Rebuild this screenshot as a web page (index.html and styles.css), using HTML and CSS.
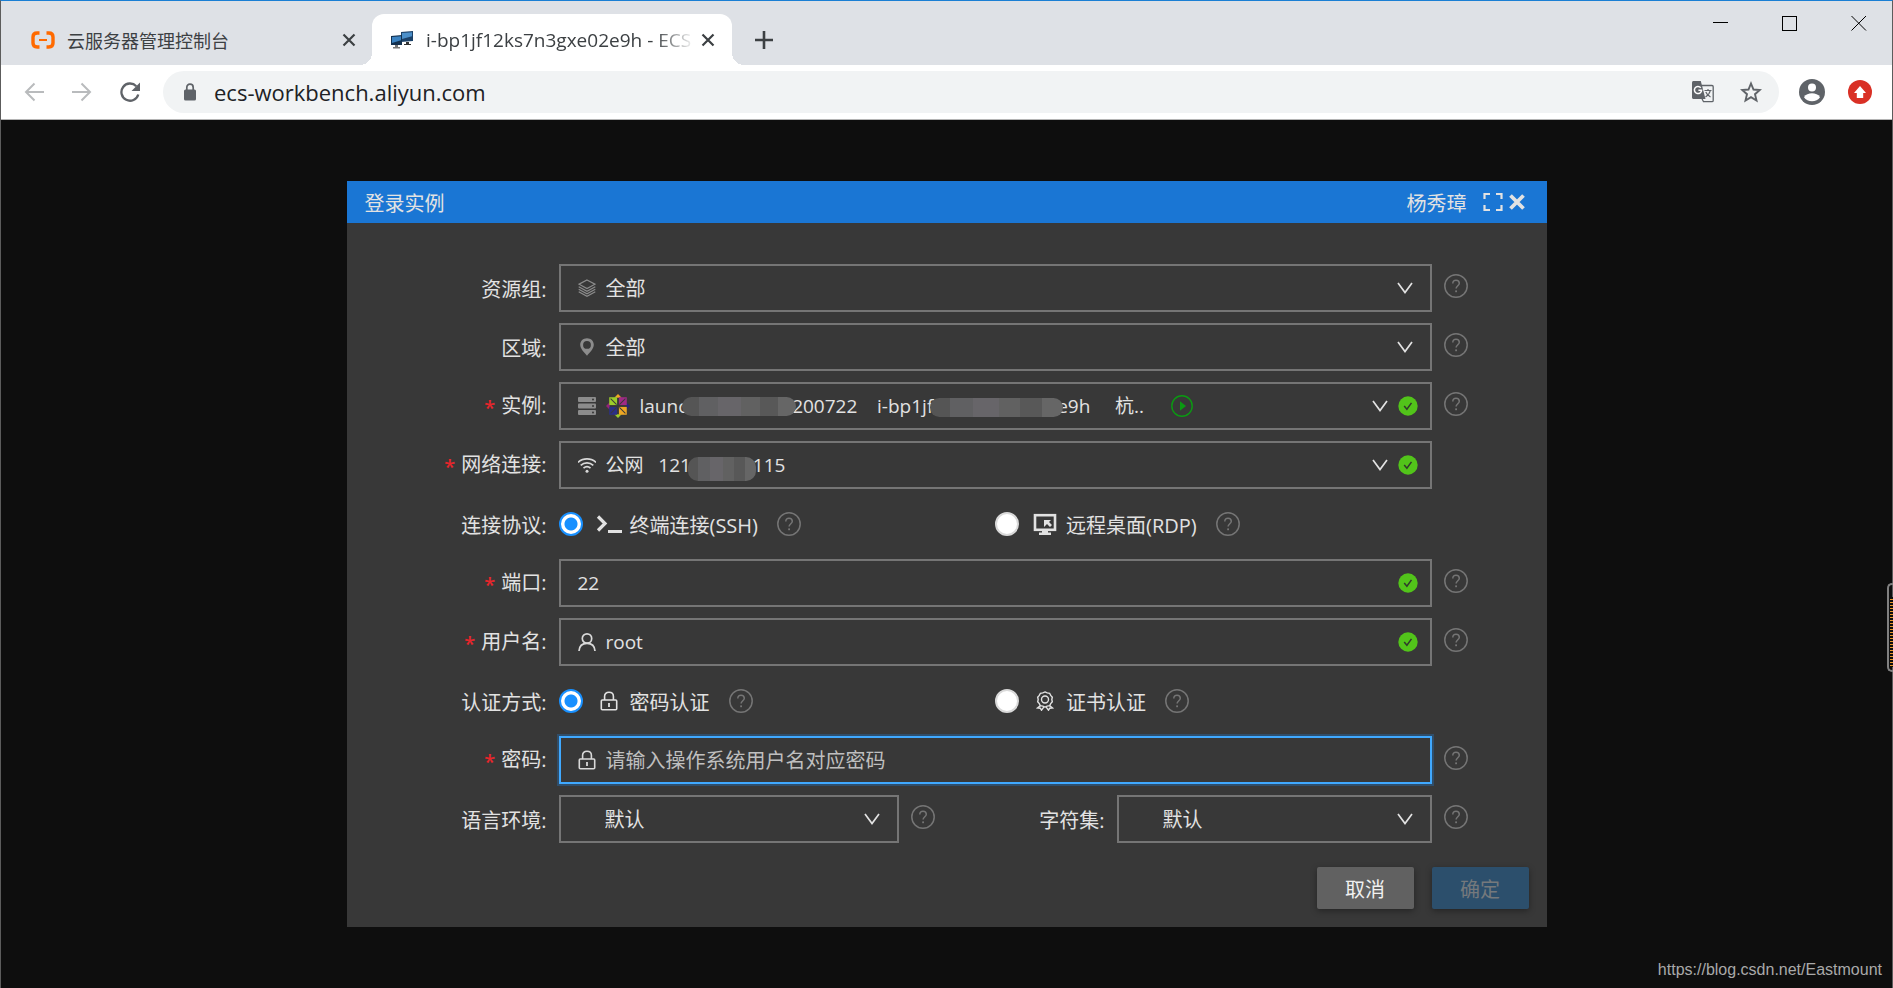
FILE: index.html
```html
<!DOCTYPE html>
<html lang="zh-CN">
<head>
<meta charset="utf-8">
<title>i-bp1jf12ks7n3gxe02e9h - ECS</title>
<link rel="stylesheet" href="styles.css">
</head>
<body>
<svg class="defs" aria-hidden="true">
  <symbol id="help" viewBox="0 0 24 24"><g fill="none" stroke="currentColor"><circle cx="12" cy="12" r="11.2" stroke-width="1.5"/><path d="M8.8 9.6C8.8 7.4 10.1 6.2 12 6.2s3.3 1.3 3.3 3.1c0 2.4-3.2 2.6-3.2 5.3" stroke-width="1.5"/></g><rect x="11.2" y="16.4" width="1.8" height="1.8" fill="currentColor"/></symbol>
  <symbol id="chevron" viewBox="0 0 16 12"><path d="M1 1l7 9.5L15 1" fill="none" stroke="currentColor" stroke-width="1.7"/></symbol>
  <symbol id="ok" viewBox="0 0 20 20"><circle cx="10" cy="10" r="9.7" fill="#52c41a"/><path d="M6.2 10l2.7 3.2 4.6-6.3" fill="none" stroke="#303a2c" stroke-width="1.5"/></symbol>
  <symbol id="lock" viewBox="0 0 18 20"><g fill="none" stroke="currentColor" stroke-width="1.6"><rect x="1.3" y="9" width="15.4" height="9.8" rx="1"/><path d="M4.6 9V5.2C4.6 2.8 6.2 1.2 9 1.2s4.4 1.6 4.4 4V9"/><path d="M9 12v4" stroke-width="1.8"/></g></symbol>
  <symbol id="close" viewBox="0 0 14 14"><path d="M1.5 1.5l11 11M12.5 1.5l-11 11" fill="none" stroke="currentColor" stroke-width="2.2"/></symbol>
</svg>

<div class="window">
  <header class="tabstrip">
    <div class="tab">
      <svg class="favicon" viewBox="0 0 24 18"><path d="M8.5 2H6.2C3.6 2 2 3.600 2 6v6c0 2.400 1.600 4 4.200 4h2.300M15.500 2h2.300C20.400 2 22 3.600 22 6v6c0 2.400-1.600 4-4.200 4h-2.300" fill="none" stroke="#ff6a00" stroke-width="3.400"/><path d="M8 9h8" stroke="#ff6a00" stroke-width="2"/></svg>
      <span class="tab-title">云服务器管理控制台</span>
      <button class="icon-btn" aria-label="关闭标签页"><svg class="s14"><use href="#close"/></svg></button>
    </div>
    <div class="tab tab-active">
      <svg class="favicon" viewBox="0 0 24 18"><path d="M11 1l12-1v10l-12 1z" fill="#1b4168"/><path d="M12 2l10-.8v4L12 8z" fill="#4b8fc9"/><path d="M16 11h3v2h2v1h-7v-1h2z" fill="#333"/><path d="M1 5l11-1v10L1 14z" fill="#12304f"/><path d="M2 6l9-.8v4L2 12z" fill="#3b83c2"/><path d="M5 14h3v2h2v1.500H3V16h2z" fill="#777"/></svg>
      <span class="tab-title tab-fade">i-bp1jf12ks7n3gxe02e9h - ECS</span>
      <button class="icon-btn" aria-label="关闭标签页"><svg class="s14"><use href="#close"/></svg></button>
    </div>
    <button class="icon-btn new-tab" aria-label="新标签页"><svg class="s18" viewBox="0 0 18 18"><path d="M9 0v18M0 9h18" stroke="currentColor" stroke-width="2.600"/></svg></button>
    <div class="win-controls">
      <button class="icon-btn" aria-label="最小化"><svg class="s16" viewBox="0 0 16 16"><path d="M0 7.500h15" stroke="#000"/></svg></button>
      <button class="icon-btn" aria-label="最大化"><svg class="s16" viewBox="0 0 16 16"><rect x=".5" y="1.500" width="14" height="14" fill="none" stroke="#000"/></svg></button>
      <button class="icon-btn" aria-label="关闭"><svg class="s16" viewBox="0 0 16 16"><path d="M.5 1l14.500 14.500M15 1L.5 15.500" stroke="#000"/></svg></button>
    </div>
  </header>

  <nav class="toolbar">
    <div class="nav-buttons">
      <button class="icon-btn faded" aria-label="后退"><svg class="s20" viewBox="0 0 20 20"><path d="M20 10H2M10.500 1.500L2 10l8.500 8.500" fill="none" stroke="currentColor" stroke-width="2"/></svg></button>
      <button class="icon-btn faded" aria-label="前进"><svg class="s20" viewBox="0 0 20 20"><path d="M0 10h18M9.500 1.500L18 10l-8.500 8.500" fill="none" stroke="currentColor" stroke-width="2"/></svg></button>
      <button class="icon-btn" aria-label="重新加载"><svg class="s20" viewBox="0 0 20 20"><path d="M16.300 4.200A8.600 8.600 0 1 0 18.300 12.500" fill="none" stroke="currentColor" stroke-width="2.300"/><path d="M20 .5V9h-8.500z" fill="currentColor"/></svg></button>
    </div>
    <label class="omnibox">
      <svg class="url-lock" viewBox="0 0 14 18"><rect x="1" y="6.500" width="12" height="11" rx="1.500" fill="#5f6368"/><path d="M3.800 7V4.500C3.800 2.500 5 1.200 7 1.200s3.200 1.300 3.200 3.300V7" fill="none" stroke="#5f6368" stroke-width="1.700"/></svg>
      <input class="url" type="text" value="ecs-workbench.aliyun.com" aria-label="地址">
      <svg class="s22" viewBox="0 0 22 22"><path d="M9 4.500h11c.7 0 1.200.5 1.200 1.200v13.800c0 .7-.5 1.200-1.200 1.200H11.500l-2-4" fill="none" stroke="#5f6368" stroke-width="1.300"/><path d="M1.500 0h7.300l4.700 18H1.500C.7 18 0 17.300 0 16.500v-15C0 .7.700 0 1.500 0z" fill="#5f6368"/><path d="M8.800 6.700A3.600 3.600 0 1 0 9.600 9.300H6.400" fill="none" stroke="#fff" stroke-width="1.500"/><path d="M12.500 9.500h7M16 8v1.500M18.300 9.500c-.6 3-2.500 5-4.800 6.500M13.800 11c.8 2 2.400 3.800 4.700 5" fill="none" stroke="#5f6368" stroke-width="1.200"/></svg>
      <svg class="s22 star" viewBox="0 0 22 22"><path d="M11 2.500l2.500 6 6.300.5-4.800 4.200 1.500 6.300-5.500-3.400-5.500 3.400L7 13.200 2.200 9l6.300-.5z" fill="none" stroke="#5f6368" stroke-width="1.900"/></svg>
    </label>
    <button class="icon-btn profile" aria-label="个人资料"><svg class="s26" viewBox="0 0 26 26"><circle cx="13" cy="13" r="13" fill="#5f6368"/><circle cx="13" cy="8.500" r="4" fill="#fff"/><path d="M5 18.200c1.500-3 4.800-4 8-4s6.500 1 8 4c-1.600 2.500-4.700 4-8 4s-6.400-1.500-8-4z" fill="#fff"/></svg></button>
    <button class="icon-btn" aria-label="更新"><svg class="s24" viewBox="0 0 24 24"><circle cx="12" cy="12" r="12" fill="#d93025"/><path d="M12 6l6 7h-2.800v5H8.800v-5H6z" fill="#fff"/></svg></button>
  </nav>

  <main class="page">
    <section class="dialog" role="dialog" aria-labelledby="dlg-title">
      <header class="dialog-head">
        <h1 class="dialog-title" id="dlg-title">登录实例</h1>
        <span class="user-name">杨秀璋</span>
        <button class="icon-btn" aria-label="全屏"><svg class="s20" viewBox="0 0 20 20"><path d="M1.500 7V2H7M13 2h5.500v5M18.500 13v5H13M7 18H1.500v-5" fill="none" stroke="currentColor" stroke-width="2.200"/></svg></button>
        <button class="icon-btn" aria-label="关闭对话框"><svg class="s16" viewBox="0 0 16 16"><path d="M1.500 1.500l13 13M14.500 1.500l-13 13" stroke="currentColor" stroke-width="3.800"/></svg></button>
      </header>

      <form class="form">
        <div class="row">
          <label class="label" for="group">资源组:</label>
          <div class="field">
            <svg class="field-icon dim" viewBox="0 0 18 18"><g fill="none" stroke="currentColor" stroke-width="1.200"><path d="M9 1l8 4.200-8 4.300L1 5.200z"/><path d="M.7 7.800L9 12.200l8.300-4.400M.7 10.300L9 14.700l8.300-4.400M.7 12.800L9 17.200l8.300-4.400"/></g></svg>
            <select class="control" id="group"><option>全部</option></select>
            <svg class="chevron"><use href="#chevron"/></svg>
          </div>
          <button type="button" class="help" aria-label="资源组说明"><svg class="s24"><use href="#help"/></svg></button>
        </div>
        <div class="row">
          <label class="label" for="region">区域:</label>
          <div class="field">
            <svg class="field-icon dim" viewBox="0 0 18 18"><path fill-rule="evenodd" d="M9 .3c3.900 0 6.800 2.800 6.800 6.500 0 4-4.300 8-6.800 11C6.500 14.800 2.200 10.800 2.200 6.800 2.200 3.100 5.100.3 9 .3zM9 3a3.900 3.900 0 1 0 0 7.800A3.900 3.900 0 0 0 9 3z" fill="currentColor"/></svg>
            <select class="control" id="region"><option>全部</option></select>
            <svg class="chevron"><use href="#chevron"/></svg>
          </div>
          <button type="button" class="help" aria-label="区域说明"><svg class="s24"><use href="#help"/></svg></button>
        </div>
        <div class="row">
          <label class="label" for="instance"><span class="req">*</span>实例:</label>
          <div class="field field-checked">
            <svg class="field-icon dim" viewBox="0 0 18 18"><g fill="currentColor"><rect width="18" height="5" rx="1"/><rect y="6.500" width="18" height="5" rx="1"/><rect y="13" width="18" height="5" rx="1"/></g><g fill="#383838"><circle cx="15" cy="2.500" r="1"/><circle cx="15" cy="9" r="1"/><circle cx="15" cy="15.500" r="1"/></g></svg>
            <svg class="s24" viewBox="0 0 26 26"><path d="M13 0l4 4H9z" fill="#efa724"/><path d="M0 13l4-4v8z" fill="#932279"/><path d="M26 13l-4-4v8z" fill="#262577"/><path d="M13 26l4-4H9z" fill="#9ccd2a"/><path d="M3.500 3.500H12V12H3.500z" fill="#9ccd2a"/><path d="M14 3.500h8.500V12H14z" fill="#a02a86"/><path d="M14 14h8.500v8.500H14z" fill="#efa724"/><path d="M3.500 14H12v8.500H3.500z" fill="#2b2f86"/><path d="M5 5l6.500 6.500M21 5l-6.500 6.500M21 21l-6.500-6.500M5 21l6.500-6.500" stroke="#3b3b3b" stroke-width="1.100"/></svg>
            <span class="instance-box">
              <select class="control mixed" id="instance"><option>launc&emsp;&emsp;&emsp;&emsp;&emsp;&nbsp;&nbsp;200722&nbsp;&nbsp;&nbsp;&nbsp;i-bp1jf&emsp;&emsp;&emsp;&emsp;&emsp;&emsp;&nbsp;&nbsp;e9h&nbsp;&nbsp;&nbsp;&nbsp;&nbsp;杭..</option></select>
              <span class="smudge smudge-name"></span>
              <span class="smudge smudge-id"></span>
              <svg class="running" viewBox="0 0 22 22"><circle cx="11" cy="11" r="10.200" fill="none" stroke="#0b9a12" stroke-width="1.400"/><path d="M9 6.300l6 4.700-6 4.700z" fill="#0b9a12"/></svg>
            </span>
            <svg class="chevron"><use href="#chevron"/></svg>
            <svg class="s20"><use href="#ok"/></svg>
          </div>
          <button type="button" class="help" aria-label="实例说明"><svg class="s24"><use href="#help"/></svg></button>
        </div>
        <div class="row">
          <label class="label" for="network"><span class="req">*</span>网络连接:</label>
          <div class="field field-checked">
            <svg class="field-icon" viewBox="0 0 18 18"><g fill="none" stroke="currentColor" stroke-width="1.700"><path d="M0 6.400c5-4.600 13-4.600 18 0M2.700 9.300c3.700-3.300 8.900-3.300 12.600 0M5.500 12.200c2.100-1.800 4.900-1.800 7 0"/></g><circle cx="9" cy="15.300" r="1.500" fill="currentColor"/></svg>
            <span class="instance-box">
              <select class="control mixed" id="network"><option>公网&nbsp;&nbsp;&nbsp;121&emsp;&emsp;&emsp;&nbsp;115</option></select>
              <span class="smudge smudge-ip"></span>
            </span>
            <svg class="chevron"><use href="#chevron"/></svg>
            <svg class="s20"><use href="#ok"/></svg>
          </div>
        </div>
        <div class="row" role="radiogroup" aria-labelledby="proto-label">
          <span class="label" id="proto-label">连接协议:</span>
          <div class="options">
            <div class="option">
              <input class="radio" type="radio" name="proto" id="ssh" checked>
              <label class="option-label" for="ssh"><svg class="s26" viewBox="0 0 26 26"><path d="M2 5.500l7 7-7 7" fill="none" stroke="currentColor" stroke-width="3.200"/><path d="M12 20.500h14" stroke="currentColor" stroke-width="3"/></svg>终端连接(SSH)</label>
              <button type="button" class="hint" aria-label="SSH 说明"><svg class="s24"><use href="#help"/></svg></button>
            </div>
            <div class="option">
              <input class="radio" type="radio" name="proto" id="rdp">
              <label class="option-label" for="rdp"><svg class="s26" viewBox="0 0 26 26"><rect x="3" y="4.200" width="20" height="14.600" fill="none" stroke="currentColor" stroke-width="2.600"/><path d="M7 21.500h12V24H7z" fill="currentColor"/><path d="M10 18h6v4h-6zM12 9h7l-2 2 3 3-2 2-3-3-3 3z" fill="currentColor"/></svg>远程桌面(RDP)</label>
              <button type="button" class="hint" aria-label="RDP 说明"><svg class="s24"><use href="#help"/></svg></button>
            </div>
          </div>
        </div>
        <div class="row">
          <label class="label" for="port"><span class="req">*</span>端口:</label>
          <div class="field field-checked">
            <input class="control mixed" id="port" type="text" value="22">
            <svg class="s20"><use href="#ok"/></svg>
          </div>
          <button type="button" class="help" aria-label="端口说明"><svg class="s24"><use href="#help"/></svg></button>
        </div>
        <div class="row">
          <label class="label" for="user"><span class="req">*</span>用户名:</label>
          <div class="field field-checked">
            <svg class="field-icon" viewBox="0 0 18 18"><g fill="none" stroke="currentColor" stroke-width="1.700"><circle cx="9" cy="5.500" r="4.700"/><path d="M1 18c.3-4.800 3.500-7.600 8-7.600s7.700 2.800 8 7.600"/></g></svg>
            <input class="control mixed" id="user" type="text" value="root">
            <svg class="s20"><use href="#ok"/></svg>
          </div>
          <button type="button" class="help" aria-label="用户名说明"><svg class="s24"><use href="#help"/></svg></button>
        </div>
        <div class="row" role="radiogroup" aria-labelledby="auth-label">
          <span class="label" id="auth-label">认证方式:</span>
          <div class="options">
            <div class="option">
              <input class="radio" type="radio" name="auth" id="pwd" checked>
              <label class="option-label" for="pwd"><svg class="option-icon"><use href="#lock"/></svg>密码认证</label>
              <button type="button" class="hint" aria-label="密码认证说明"><svg class="s24"><use href="#help"/></svg></button>
            </div>
            <div class="option">
              <input class="radio" type="radio" name="auth" id="cert">
              <label class="option-label" for="cert"><svg class="option-icon" viewBox="0 0 18 20"><g fill="none" stroke="currentColor" stroke-width="1.400"><path d="M9 .9l2.200 1 2.400.4 1.100 2.100 1.600 1.800-.5 2.300.5 2.300-1.600 1.800-1.100 2.100-2.400.4-2.200 1-2.200-1-2.400-.4-1.100-2.100-1.600-1.800.5-2.300-.5-2.300 1.600-1.800 1.100-2.100 2.400-.4z"/><circle cx="9" cy="8.500" r="3.500"/><path d="M4.500 14.600L1.500 17l2.800.2 1.200 2 2.500-3.300M13.500 14.600l3 2.400-2.800.2-1.200 2-2.500-3.300"/></g></svg>证书认证</label>
              <button type="button" class="hint" aria-label="证书认证说明"><svg class="s24"><use href="#help"/></svg></button>
            </div>
          </div>
        </div>
        <div class="row">
          <label class="label" for="password"><span class="req">*</span>密码:</label>
          <div class="field field-focus">
            <svg class="field-icon" viewBox="0 0 18 20"><use href="#lock"/></svg>
            <input class="control" id="password" type="password" placeholder="请输入操作系统用户名对应密码">
          </div>
          <button type="button" class="help" aria-label="密码说明"><svg class="s24"><use href="#help"/></svg></button>
        </div>
        <div class="row row-split">
          <label class="label" for="lang">语言环境:</label>
          <div class="field field-indent">
            <select class="control" id="lang"><option>默认</option></select>
            <svg class="chevron"><use href="#chevron"/></svg>
          </div>
          <button type="button" class="help" aria-label="语言环境说明"><svg class="s24"><use href="#help"/></svg></button>
          <label class="label" for="charset">字符集:</label>
          <div class="field field-indent">
            <select class="control" id="charset"><option>默认</option></select>
            <svg class="chevron"><use href="#chevron"/></svg>
          </div>
          <button type="button" class="help" aria-label="字符集说明"><svg class="s24"><use href="#help"/></svg></button>
        </div>
        <div class="actions">
          <button type="button" class="btn">取消</button>
          <button type="submit" class="btn btn-primary" disabled>确定</button>
        </div>
      </form>
    </section>
    <span class="side-handle"></span>
    <a class="watermark" href="https://blog.csdn.net/Eastmount">https://blog.csdn.net/Eastmount</a>
  </main>
</div>
</body>
</html>
```

FILE: styles.css
```css
* { box-sizing: border-box; }

body {
  margin: 0;
  background: #0e0e0e;
  font-family: "Open Sans", "Noto Sans CJK SC", sans-serif;
  font-size: 20px;
}

button, input, select { font: inherit; }
svg { flex: none; display: block; }

.defs { position: absolute; width: 0; height: 0; }

.s14 { width: 14px; height: 14px; }
.s16 { width: 16px; height: 16px; }
.s18 { width: 18px; height: 18px; }
.s20 { width: 20px; height: 20px; }
.s22 { width: 22px; height: 22px; }
.s24 { width: 24px; height: 24px; }
.s26 { width: 26px; height: 26px; }

.icon-btn, .help, .hint {
  display: flex;
  align-items: center;
  padding: 0;
  border: 0;
  background: none;
  color: inherit;
}

.window {
  display: flex;
  flex-direction: column;
  min-height: 100vh;
  border: 1px solid #5c5c5c;
  border-top-color: #1a7fd4;
}

/* browser tabs */
.tabstrip {
  display: flex;
  align-items: flex-end;
  height: 64px;
  background: #dee1e6;
  color: #3c4043;
}

.tab {
  display: flex;
  align-items: center;
  gap: 12px;
  width: 371px;
  height: 51px;
  padding: 0 16px 0 30px;
  font-size: 18px;
}

.tab-active {
  position: relative;
  width: 360px;
  padding: 0 17px 0 18px;
  border-radius: 12px 12px 0 0;
  background: #fff;
}

.tab-active::before,
.tab-active::after {
  content: "";
  position: absolute;
  bottom: 0;
  width: 12px;
  height: 12px;
}

.tab-active::before {
  right: 100%;
  background: radial-gradient(circle at 0 0, transparent 12px, #fff 12px);
}

.tab-active::after {
  left: 100%;
  background: radial-gradient(circle at 100% 0, transparent 12px, #fff 12px);
}

.favicon { width: 24px; height: 18px; }
.tab-title { flex: 1; min-width: 0; overflow: hidden; white-space: nowrap; }

.tab-fade {
  margin-right: -6px;
  font-size: 19px;
  mask-image: linear-gradient(to right, #000 85%, transparent);
}

.new-tab { height: 51px; margin-left: 23px; }
.win-controls { display: flex; gap: 53px; align-self: flex-start; margin: 14px 25px 0 auto; }

/* address bar */
.toolbar {
  display: flex;
  align-items: center;
  height: 55px;
  padding: 0 20px 0 23px;
  border-bottom: 1px solid #b4b4b4;
  background: #fff;
  color: #5f6368;
}

.nav-buttons { display: flex; gap: 28px; }
.faded { color: #b9bbbd; }

.omnibox {
  display: flex;
  flex: 1;
  align-items: center;
  gap: 17px;
  height: 42px;
  margin: 0 20px 0 23px;
  padding: 0 17px 0 20px;
  border-radius: 21px;
  background: #f1f3f4;
}

.url-lock { width: 14px; height: 18px; }
.star { margin-left: 9px; }

.url {
  flex: 1;
  min-width: 0;
  height: 30px;
  padding: 0;
  border: 0;
  outline: 0;
  background: none;
  color: #202124;
  font-size: 22px;
}

.profile { margin-right: 23px; }

/* page */
.page {
  position: relative;
  flex: 1;
  padding: 61px 0;
}

.dialog {
  max-width: 1200px;
  margin: 0 auto;
  background: #383838;
  color: #e2e2e2;
}

.dialog-head {
  display: flex;
  align-items: center;
  height: 42px;
  padding: 0 22px 0 18px;
  background: #1a76d4;
}

.dialog-title { flex: 1; margin: 0; font-size: 20px; font-weight: 400; }
.user-name { margin-right: 16px; }
.dialog-head .icon-btn { margin-right: 6px; }
.dialog-head .icon-btn:last-child { margin-right: 0; }

.form {
  display: flex;
  flex-direction: column;
  gap: 11px;
  padding: 41px 18px 18px 0;
}

.row {
  display: grid;
  grid-template-columns: 200px 1fr 24px;
  align-items: center;
  column-gap: 12px;
  height: 48px;
  padding-right: 61px;
}

.row-split { grid-template-columns: 200px 340fr 24px 158px 315fr 24px; }

.label {
  display: flex;
  justify-content: flex-end;
  white-space: nowrap;
}

.req {
  margin-right: 6px;
  padding-top: 4px;
  color: #e5262c;
  font-weight: 600;
  line-height: 28px;
}

.field {
  display: flex;
  align-items: center;
  gap: 10px;
  height: 48px;
  min-width: 0;
  padding: 0 17px;
  border: 2px solid #757575;
}

.field-checked { padding-right: 12px; }
.field-indent { padding-left: 44px; }

.field-focus {
  border-color: #40a9ff;
  box-shadow: 0 0 0 2px rgba(24, 144, 255, .25);
}

.field-icon { width: 18px; height: 20px; color: #d9d9d9; }
.dim { color: #8c8c8c; }
.chevron { width: 16px; height: 12px; }

.control {
  flex: 1;
  width: 100%;
  min-width: 0;
  height: 44px;
  padding: 0;
  border: 0;
  outline: 0;
  appearance: none;
  background: none;
  color: inherit;
}

.control::placeholder { color: #bfbfbf; opacity: 1; }
.mixed { font-size: 19px; }

.instance-box {
  position: relative;
  display: flex;
  flex: 1;
  min-width: 0;
}

/* blurred-out parts of the identifiers */
.smudge {
  position: absolute;
  height: 19px;
  border-radius: 10px;
  background: linear-gradient(90deg, #555 0 15%, #606062 15% 32%, #676569 32% 52%, #616161 52% 68%, #585858 68% 84%, #666 84%);
}

.smudge-name { top: 13px; left: 42px; width: 114px; }
.smudge-id { top: 14px; left: 290px; width: 133px; }
.smudge-ip { top: 14px; left: 82px; width: 68px; height: 24px; }
.running { position: absolute; top: 11px; left: 531px; width: 22px; height: 22px; }

.options { display: grid; grid-template-columns: 1fr 1fr; }
.option { display: flex; align-items: center; }

.radio {
  width: 24px;
  height: 24px;
  margin: 0 13px 0 0;
  border: 2px solid #d9d9d9;
  border-radius: 50%;
  appearance: none;
  background: #fff;
}

.radio:checked {
  border-color: #1890ff;
  background: radial-gradient(circle, #1890ff 6px, #fff 7px);
}

.option-label { display: flex; align-items: center; gap: 8px; white-space: nowrap; }
.option-icon { width: 18px; height: 20px; margin: 0 4px; }

.help, .hint { width: 24px; color: #757575; }
.help { margin-bottom: 4px; }
.hint { margin-left: 19px; }

.actions {
  display: flex;
  justify-content: flex-end;
  gap: 18px;
  padding-top: 13px;
}

.btn {
  width: 97px;
  height: 42px;
  padding: 0;
  border: 0;
  border-radius: 2px;
  background: #616161;
  box-shadow: 0 2px 6px rgba(0, 0, 0, .35);
  color: #f0f0f0;
}

.btn-primary { background: #2c4f6c; color: #75797c; }

.side-handle {
  position: absolute;
  top: 463px;
  right: -1px;
  width: 6px;
  height: 89px;
  border: 2px solid #808080;
  border-right: 0;
  border-radius: 5px 0 0 5px;
  background: repeating-linear-gradient(#0e0e0e 0 2px, #e8962a 2px 3px) content-box;
  padding: 12px 0 3px 1px;
}

.watermark {
  position: absolute;
  right: 10px;
  bottom: 9px;
  color: #a9a9a9;
  font-family: "Liberation Sans", Arial, sans-serif;
  font-size: 16px;
  text-decoration: none;
}
```
